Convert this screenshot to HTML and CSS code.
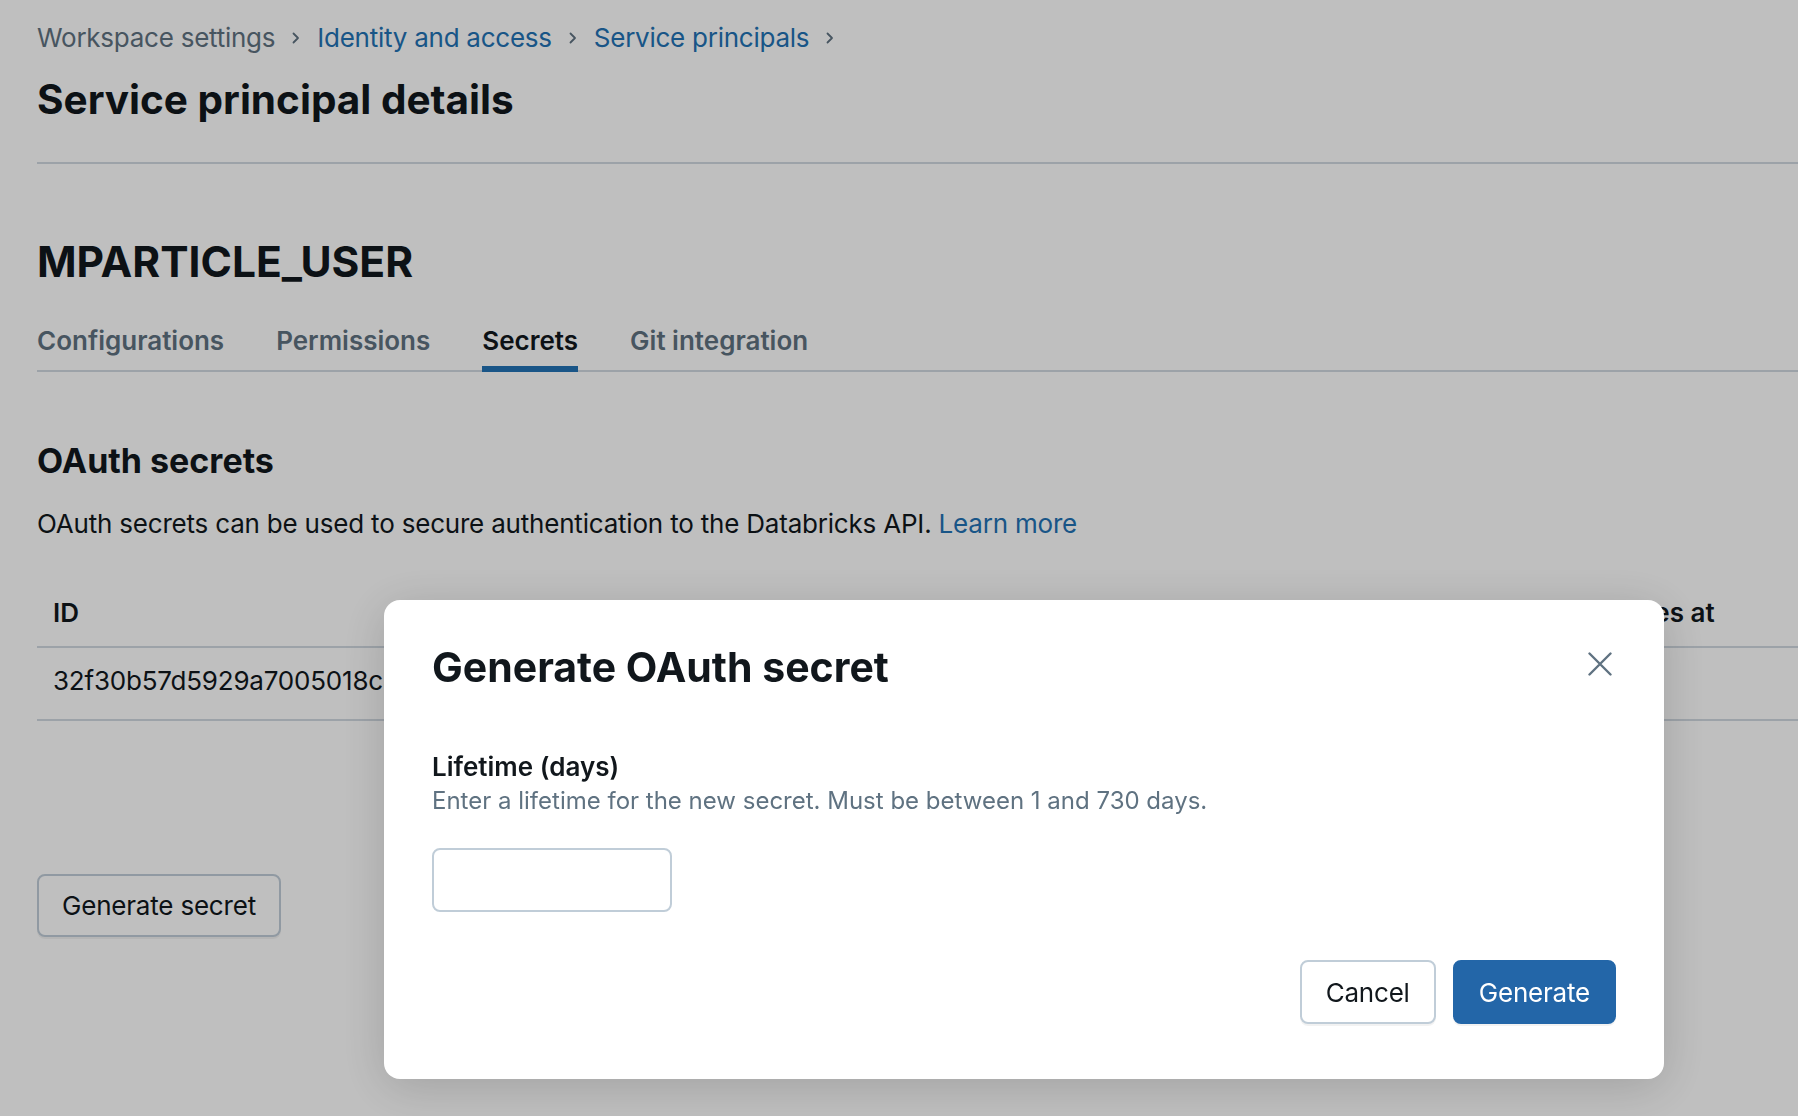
FILE: index.html
```html
<!DOCTYPE html>
<html lang="en">
<head>
<meta charset="utf-8">
<title>Service principal details</title>
<link rel="stylesheet" href="styles.css">
</head>
<body>
<div class="page">
  <nav class="breadcrumb">
    <span class="crumb-muted">Workspace settings</span>
    <svg class="sep" width="8" height="12" viewBox="0 0 8 12"><polyline points="1.5,1.5 6,6 1.5,10.5" fill="none" stroke="currentColor" stroke-width="1.8" stroke-linecap="round" stroke-linejoin="round"/></svg>
    <a class="crumb-link" href="#">Identity and access</a>
    <svg class="sep" width="8" height="12" viewBox="0 0 8 12"><polyline points="1.5,1.5 6,6 1.5,10.5" fill="none" stroke="currentColor" stroke-width="1.8" stroke-linecap="round" stroke-linejoin="round"/></svg>
    <a class="crumb-link" href="#">Service principals</a>
    <svg class="sep" width="8" height="12" viewBox="0 0 8 12"><polyline points="1.5,1.5 6,6 1.5,10.5" fill="none" stroke="currentColor" stroke-width="1.8" stroke-linecap="round" stroke-linejoin="round"/></svg>
  </nav>
  <h1 class="page-title">Service principal details</h1>
  <hr class="divider">
  <h2 class="entity-name">MPARTICLE_USER</h2>
  <div class="tabs">
    <div class="tab">Configurations</div>
    <div class="tab">Permissions</div>
    <div class="tab active">Secrets</div>
    <div class="tab">Git integration</div>
  </div>
  <section class="secrets">
    <h3 class="section-title">OAuth secrets</h3>
    <p class="section-desc">OAuth secrets can be used to secure authentication to the Databricks API. <a class="link" href="#">Learn more</a></p>
    <div class="table">
      <div class="tr th">
        <div class="td">ID</div>
        <div class="td">Created at</div>
        <div class="td">Expires at</div>
      </div>
      <div class="tr">
        <div class="td">32f30b57d5929a7005018c4e2b91d7a6</div>
        <div class="td"></div>
        <div class="td"></div>
      </div>
    </div>
    <button class="btn">Generate secret</button>
  </section>
</div>

<div class="modal-layer">
  <div class="modal" role="dialog">
    <div class="modal-header">
      <h2 class="modal-title">Generate OAuth secret</h2>
      <button class="close" aria-label="Close">
        <svg width="24" height="24" viewBox="0 0 24 24"><path d="M1.5 1.5 L22.5 22.5 M22.5 1.5 L1.5 22.5" fill="none" stroke="currentColor" stroke-width="2.4" stroke-linecap="round"/></svg>
      </button>
    </div>
    <div class="field-label">Lifetime (days)</div>
    <div class="field-help">Enter a lifetime for the new secret. Must be between 1 and 730 days.</div>
    <input class="input" type="text">
    <div class="modal-footer">
      <button class="btn btn-default">Cancel</button>
      <button class="btn btn-primary">Generate</button>
    </div>
  </div>
</div>
</body>
</html>
```

FILE: styles.css
```css
html, body {
  margin: 0;
  padding: 0;
}
body {
  width: 1798px;
  height: 1116px;
  overflow: hidden;
  background: #ffffff;
  color: #11171c;
  font-family: Inter, "Noto Sans", sans-serif;
}
.page {
  width: 1974px;
  padding: 18px 0 0 37px;
}
.breadcrumb {
  display: flex;
  align-items: center;
  gap: 17px;
  height: 40px;
  font-size: 26px;
  line-height: 40px;
  letter-spacing: -0.25px;
}
.crumb-muted { color: #5f7281; }
.crumb-link { color: #2272b4; text-decoration: none; }
.sep { color: #5f7281; }
.page-title {
  margin: 13.5px 0 0;
  font-size: 40.5px;
  line-height: 56px;
  font-weight: 700;
}
.divider {
  margin: 34.5px 0 0;
  height: 0;
  border: 0;
  border-top: 2px solid #d1d9e1;
}
.entity-name {
  margin: 69.5px 0 0;
  font-size: 42.5px;
  line-height: 56px;
  font-weight: 700;
}
.tabs {
  margin-top: 31px;
  display: flex;
  gap: 52px;
  border-bottom: 2px solid #d1d9e1;
}
.tab {
  font-size: 26px;
  line-height: 40px;
  font-weight: 600;
  color: #5f7281;
  padding-bottom: 5.5px;
  border-bottom: 6px solid transparent;
  margin-bottom: -2px;
}
.tab.active {
  color: #11171c;
  border-bottom-color: #2272b4;
}
.section-title {
  margin: 67px 0 0;
  font-size: 34px;
  line-height: 44px;
  font-weight: 700;
}
.section-desc {
  margin: 20.5px 0 0;
  font-size: 26px;
  line-height: 40px;
  letter-spacing: -0.2px;
}
.link { color: #2272b4; text-decoration: none; }
.table {
  margin-top: 35px;
}
.tr {
  display: grid;
  grid-template-columns: 769px 769px 1fr;
  border-bottom: 2px solid #d1d9e1;
}
.td {
  font-size: 26px;
  line-height: 40px;
  padding: 12.5px 16px 18.5px;
  white-space: nowrap;
  overflow: hidden;
  letter-spacing: -0.2px;
}
.th .td {
  font-weight: 600;
  padding: 14px 16px 13.5px;
  letter-spacing: 0;
}
.btn {
  box-sizing: border-box;
  height: 63px;
  padding: 0 23px;
  font-family: inherit;
  font-size: 26px;
  letter-spacing: -0.2px;
  color: #11171c;
  background: #ffffff;
  border: 2px solid #c0cdd8;
  border-radius: 8px;
  box-shadow: 0 2px 0 rgba(0, 0, 0, 0.05);
}
.secrets .btn {
  margin-top: 153px;
}
.modal-layer {
  position: fixed;
  inset: 0;
  background: rgba(0, 0, 0, 0.25);
}
.modal {
  position: absolute;
  left: 384px;
  top: 600px;
  width: 1280px;
  box-sizing: border-box;
  padding: 38.5px 48px 55px;
  background: #ffffff;
  border-radius: 16px;
  box-shadow: 0 8px 48px rgba(0, 0, 0, 0.16);
}
.modal-header {
  display: flex;
  justify-content: space-between;
  align-items: flex-start;
}
.modal-title {
  margin: 0;
  font-size: 41px;
  line-height: 56px;
  font-weight: 700;
}
.close {
  width: 32px;
  height: 32px;
  margin-top: 9px;
  padding: 0;
  border: 0;
  background: transparent;
  color: #5f7281;
  display: flex;
  align-items: center;
  justify-content: center;
}
.field-label {
  margin-top: 55px;
  font-size: 26px;
  line-height: 34px;
  font-weight: 600;
}
.field-help {
  font-size: 24px;
  line-height: 34px;
  color: #5f7281;
}
.input {
  display: block;
  box-sizing: border-box;
  margin-top: 30.5px;
  width: 240px;
  height: 64px;
  border: 2px solid #c0cdd8;
  border-radius: 8px;
  background: #ffffff;
}
.modal-footer {
  margin-top: 48px;
  display: flex;
  justify-content: flex-end;
  gap: 17px;
}
.modal-footer .btn {
  height: 64px;
  padding: 0 24px;
}
.btn-primary {
  background: #2366a8;
  border-color: #2366a8;
  color: #ffffff;
}
```
